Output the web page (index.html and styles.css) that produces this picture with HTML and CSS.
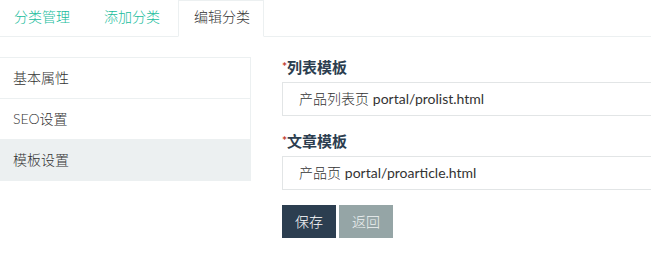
FILE: index.html
```html
<!DOCTYPE html>
<html lang="zh-CN">
<head>
<meta charset="utf-8">
<title>编辑分类</title>
<link rel="stylesheet" href="styles.css">
</head>
<body>
<div class="page">
  <ul class="tabs">
    <li class="tab"><a href="#">分类管理</a></li>
    <li class="tab"><a href="#">添加分类</a></li>
    <li class="tab active"><a href="#">编辑分类</a></li>
  </ul>
  <div class="content">
    <div class="side">
      <div class="list-item">基本属性</div>
      <div class="list-item">SEO设置</div>
      <div class="list-item active">模板设置</div>
    </div>
    <div class="main">
      <div class="group">
        <label class="label"><span class="req">*</span>列表模板</label>
        <div class="input">产品列表页 <span class="path">portal/prolist.html</span></div>
      </div>
      <div class="group">
        <label class="label"><span class="req">*</span>文章模板</label>
        <div class="input">产品页 <span class="path">portal/proarticle.html</span></div>
      </div>
      <div class="actions">
        <button class="btn btn-primary">保存</button>
        <button class="btn btn-default">返回</button>
      </div>
    </div>
  </div>
</div>
</body>
</html>
```

FILE: styles.css
```css
html, body {
  margin: 0;
  padding: 0;
  overflow: hidden;
  background: #fff;
}
body {
  font-family: Lato, "Noto Sans CJK SC", sans-serif;
  font-size: 14px;
  line-height: 20px;
  font-weight: 300;
  color: #2c3e50;
}
.page {
  width: 651px;
  height: 265px;
  overflow: hidden;
}
.tabs {
  list-style: none;
  margin: 0;
  padding: 0;
  display: flex;
  height: 36px;
  border-bottom: 1px solid #ecf0f1;
}
.tab {
  margin-right: 4px;
  margin-bottom: -1px;
}
.tab:first-child {
  margin-left: -2px;
}
.tab a {
  display: block;
  box-sizing: border-box;
  height: 37px;
  padding: 6px 13px 0 15px;
  border: 1px solid transparent;
  color: #18bc9c;
  text-decoration: none;
}
.tab.active a {
  border-color: #ecf0f1;
  border-bottom-color: #fff;
  background: #fff;
  color: #333;
}
.content {
  display: flex;
  margin-top: 20px;
  gap: 31px;
  margin-left: -3px;
}
.side {
  flex: 0 0 254px;
}
.list-item {
  padding: 10px 15px;
  border: 1px solid #ecf0f1;
  margin-bottom: -1px;
  color: #333;
  line-height: 20px;
}
.list-item.active {
  background: #ecf0f1;
  border-color: #ecf0f1;
}
.main {
  flex: 0 0 420px;
}
.group {
  margin-bottom: 15px;
}
.label {
  display: block;
  font-weight: bold;
  font-size: 15px;
  line-height: 20px;
  margin-bottom: 5px;
  color: #2c3e50;
}
.req {
  color: #c0392b;
  font-size: 12px;
  vertical-align: 2px;
}
.input {
  box-sizing: border-box;
  height: 34px;
  padding: 6px 16px;
  border: 1px solid #e2e5e6;
  color: #333;
  line-height: 20px;
}
.path {
  font-weight: 400;
}
.actions {
  display: flex;
  gap: 3px;
}
.btn {
  font-family: Lato, "Noto Sans CJK SC", sans-serif;
  font-size: 14px;
  font-weight: 300;
  line-height: 20px;
  height: 33px;
  padding: 0 12px;
  border: 1px solid transparent;
  border-radius: 0;
  color: #fff;
  cursor: pointer;
}
.btn-primary {
  background: #2c3e50;
}
.btn-default {
  background: #95a5a6;
  color: #eef2f2;
}
```
